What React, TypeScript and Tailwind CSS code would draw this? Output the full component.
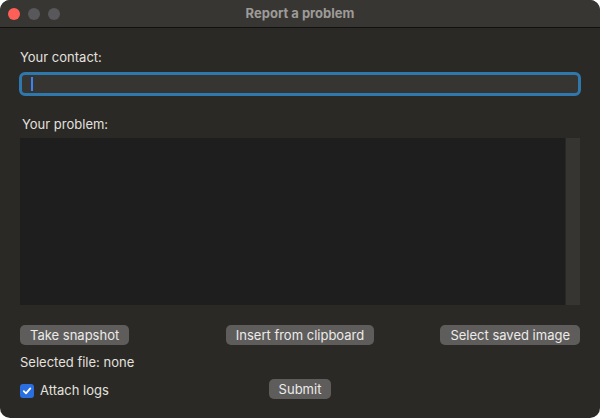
export default function App() {
  return (
    <div className="w-[600px] h-[418px] bg-white" style={{ fontFamily: 'Inter, "Liberation Sans", sans-serif' }}>
      <div className="w-full h-full rounded-[10px] overflow-hidden bg-[#2b2926] flex flex-col text-[13px] text-[#e2e1df]">
        {/* Title bar */}
        <div className="h-[28px] shrink-0 bg-[#383633] border-b border-[#111] flex items-center relative">
          <div className="flex gap-2 pl-[8px]">
            <span className="w-3 h-3 rounded-full bg-[#fe5f57]" />
            <span className="w-3 h-3 rounded-full bg-[#58575a]" />
            <span className="w-3 h-3 rounded-full bg-[#58575a]" />
          </div>
          <div className="absolute inset-0 flex items-center justify-center font-bold text-[#9d9b98]">
            Report a problem
          </div>
        </div>

        <div className="flex flex-col px-5 pt-[20px]">
          <div className="leading-[18px]">Your contact:</div>
          <div className="mt-[6px] h-[24px] -mx-px rounded-[6px] border-[3px] border-[#2f78ad] bg-[#373532] flex items-center pl-[9px]">
            <span className="w-[2px] h-[14px] bg-[#3b82f6]" />
          </div>
          <div className="mt-[19px] pl-[2px] leading-[18px]">Your problem:</div>
          <div className="mt-[5px] h-[167px] flex bg-[#1e1e1e]">
            <div className="flex-1" />
            <div className="w-[15px] bg-[#373532] border-l border-[#2a2825]" />
          </div>

          <div className="mt-[20px] grid grid-cols-3 items-center">
            <button className="justify-self-start h-[20px] px-[10px] rounded-[5px] bg-[#5e5d5b] text-[#ecebea] leading-none">Take snapshot</button>
            <button className="justify-self-center h-[20px] px-[10px] rounded-[5px] bg-[#5e5d5b] text-[#ecebea] leading-none">Insert from clipboard</button>
            <button className="justify-self-end h-[20px] px-[10px] rounded-[5px] bg-[#5e5d5b] text-[#ecebea] leading-none">Select saved image</button>
          </div>

          <div className="mt-[8px] leading-[18px]">Selected file: none</div>

          <div className="mt-[8px] flex items-center relative h-[24px]">
            <span className="w-[14px] h-[14px] rounded-[3px] bg-[#2a6ee0] flex items-center justify-center">
              <svg width="10" height="10" viewBox="0 0 10 10" fill="none">
                <path d="M1.8 5.2 L4 7.4 L8.3 2.4" stroke="white" strokeWidth="1.8" strokeLinecap="round" strokeLinejoin="round" />
              </svg>
            </span>
            <span className="ml-[6px]">Attach logs</span>
            <div className="absolute inset-0 flex justify-center items-center pointer-events-none -translate-y-[2px]">
              <button className="h-[20px] px-[10px] rounded-[5px] bg-[#5e5d5b] text-[#ecebea] leading-none">Submit</button>
            </div>
          </div>
        </div>
      </div>
    </div>
  )
}
